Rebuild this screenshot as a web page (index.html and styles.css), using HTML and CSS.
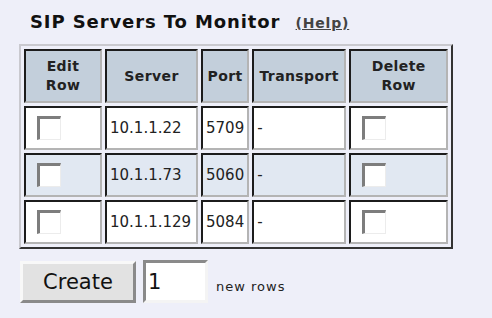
FILE: index.html
```html
<!DOCTYPE html>
<html lang="en">
<head>
  <meta charset="UTF-8">
  <title>SIP Servers To Monitor</title>
  <link rel="stylesheet" href="styles.css">
</head>
<body>

  <div class="panel">
    <h2 class="panel-title">SIP Servers To Monitor <a href="#help" class="help-link">(Help)</a></h2>

    <table class="grid">
      <tr>
        <th class="col-edit">Edit<br>Row</th>
        <th class="col-server">Server</th>
        <th class="col-port">Port</th>
        <th class="col-transport">Transport</th>
        <th class="col-delete">Delete<br>Row</th>
      </tr>
      <tr>
        <td><span class="check"></span></td>
        <td>10.1.1.22</td>
        <td>5709</td>
        <td>-</td>
        <td><span class="check"></span></td>
      </tr>
      <tr class="alt">
        <td><span class="check"></span></td>
        <td>10.1.1.73</td>
        <td>5060</td>
        <td>-</td>
        <td><span class="check"></span></td>
      </tr>
      <tr>
        <td><span class="check"></span></td>
        <td>10.1.1.129</td>
        <td>5084</td>
        <td>-</td>
        <td><span class="check"></span></td>
      </tr>
    </table>

    <div class="create-bar">
      <button class="create-btn">Create</button>
      <span class="rows-input">1</span>
      <span class="rows-label">new rows</span>
    </div>
  </div>

</body>
</html>
```

FILE: styles.css
```css
body {
  margin: 0;
  background: #eeeff9;
  font-family: 'DejaVu Sans', Verdana, sans-serif;
  color: #222;
}

.panel {
  padding: 11px 0 0 19px;
}

/* Title */
.panel-title {
  margin: 0 0 10px 11px;
  font-size: 18px;
  font-weight: bold;
  letter-spacing: 0.9px;
  color: #111;
  line-height: 21px;
}

.help-link {
  margin-left: 8px;
  font-size: 14px;
  letter-spacing: 0.8px;
  color: #444;
  text-decoration: underline;
}

/* Table */
.grid {
  border-collapse: separate;
  border-spacing: 3px;
  border: 2px solid;
  border-color: #c9c9cf #333 #333 #c9c9cf;
  table-layout: fixed;
}

.grid th,
.grid td {
  border: 2px solid;
  border-color: #1c1c1c #b4b4b4 #b4b4b4 #1c1c1c;
  box-sizing: border-box;
}

.grid th {
  height: 54px;
  padding: 0;
  background: #c3cfdb;
  font-size: 14px;
  font-weight: bold;
  letter-spacing: 0.4px;
  line-height: 19px;
  text-align: center;
}

.grid td {
  height: 44px;
  padding: 0 3px;
  background: #fff;
  font-size: 15px;
  text-align: left;
  white-space: nowrap;
}

.grid tr.alt td {
  background: #e1e8f2;
}

.col-edit { width: 78px; }
.col-server { width: 93px; }
.col-port { width: 47px; }
.col-transport { width: 94px; }
.col-delete { width: 99px; }

.check {
  display: block;
  width: 20px;
  height: 20px;
  margin-left: 8px;
  background: #fff;
  border-top: 3px solid #7d7d7d;
  border-left: 3px solid #7d7d7d;
  border-right: 1px solid #ececec;
  border-bottom: 1px solid #ececec;
}

/* Create row */
.create-bar {
  display: flex;
  align-items: center;
  margin-top: 11px;
  margin-left: 1px;
}

.create-btn {
  width: 116px;
  height: 42px;
  padding: 0;
  background: #e2e2e2;
  border: 3px solid;
  border-color: #f8f8f8 #8a8a8a #8a8a8a #f8f8f8;
  font-family: 'DejaVu Sans', Verdana, sans-serif;
  font-size: 21px;
  color: #111;
}

.rows-input {
  box-sizing: border-box;
  width: 65px;
  height: 43px;
  margin-left: 7px;
  padding: 4px 0 0 2px;
  background: #fff;
  border: 3px solid;
  border-color: #8a8a8a #f4f4f4 #f4f4f4 #8a8a8a;
  font-size: 21px;
  line-height: 30px;
  color: #111;
}

.rows-label {
  margin-left: 8px;
  margin-top: 10px;
  font-size: 13px;
  letter-spacing: 1px;
  color: #222;
}
```
